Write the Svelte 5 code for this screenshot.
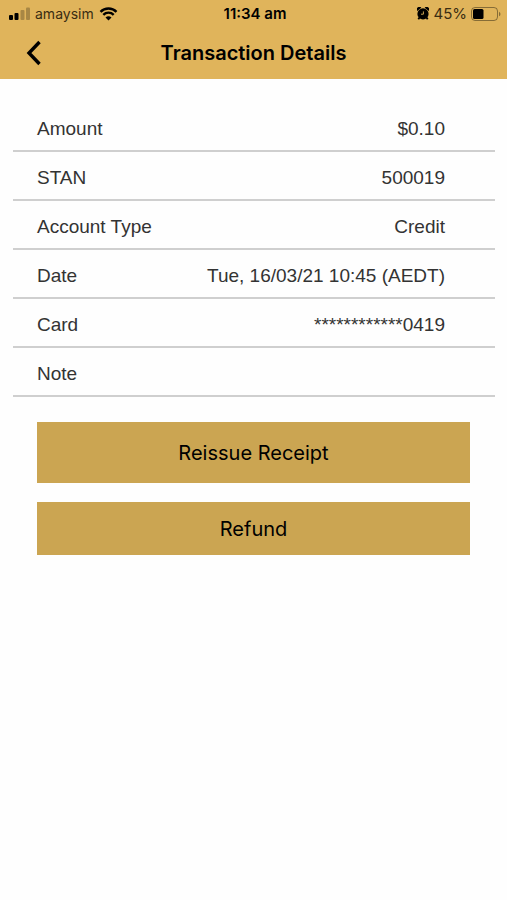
<script lang="ts">
    type Row = { label: string; value: string };

    const carrier = 'amaysim';
    const time = '11:34 am';
    const battery = 45;

    let rows = $state<Row[]>([
        { label: 'Amount', value: '$0.10' },
        { label: 'STAN', value: '500019' },
        { label: 'Account Type', value: 'Credit' },
        { label: 'Date', value: 'Tue, 16/03/21 10:45 (AEDT)' },
        { label: 'Card', value: '************0419' },
        { label: 'Note', value: '' },
    ]);
</script>

<svelte:head>
    <title>Transaction Details</title>
</svelte:head>

<header>
    <div class="status">
        <div class="side">
            <svg width="21" height="14" viewBox="0 0 21 14" aria-hidden="true">
                <rect x="0" y="8" width="4" height="5" rx="1" />
                <rect x="5.5" y="6" width="4" height="7" rx="1" />
                <rect x="11.5" y="3" width="4" height="10" rx="1" opacity="0.25" />
                <rect x="17" y="0.5" width="4" height="12.5" rx="1" opacity="0.25" />
            </svg>
            <span class="carrier">{carrier}</span>
            <svg class="wifi" width="19" height="14" viewBox="0 0 18 14" aria-hidden="true">
                <path d="M1 4.8a11.4 11.4 0 0 1 16 0" />
                <path d="M3.8 7.8a7.4 7.4 0 0 1 10.4 0" />
                <path class="dot" d="M9 13.6 6 10.6a4.3 4.3 0 0 1 6 0z" />
            </svg>
        </div>
        <span class="time">{time}</span>
        <div class="side right">
            <svg width="12" height="13" viewBox="0 0 12 13" aria-hidden="true">
                <path d="M0.3 4a2.3 2.3 0 0 1 4-3.2zM11.7 4a2.3 2.3 0 0 0-4-3.2z" />
                <circle cx="6" cy="6.9" r="5.6" />
                <path d="m2.5 10.4-1.2 1.9M9.5 10.4l1.2 1.9" stroke="#000" stroke-width="1.8" />
                <path d="M6.4 4.4v2.8H4" fill="none" stroke="#e0b45b" stroke-width="0.9" />
            </svg>
            <span class="percent">{battery}%</span>
            <svg width="30" height="14" viewBox="0 0 30 14" aria-hidden="true">
                <rect x="0.5" y="0.5" width="26" height="13" rx="3.5" fill="none" stroke="#000" stroke-opacity="0.4" />
                <rect x="2" y="2" width="10.5" height="10" rx="1.5" />
                <path d="M28 4.7a2.5 2.5 0 0 1 0 4.6z" opacity="0.4" />
            </svg>
        </div>
    </div>
    <nav>
        <button class="back" aria-label="Back">
            <svg width="18" height="26" viewBox="0 0 18 26" aria-hidden="true">
                <path d="M15.5 2 5 13l10.5 11" fill="none" stroke="#000" stroke-width="3.4" />
            </svg>
        </button>
        <h1>Transaction Details</h1>
    </nav>
</header>

<main>
    <table>
        <tbody>
            {#each rows as row}
                <tr>
                    <th scope="row">{row.label}</th>
                    <td>{row.value}</td>
                </tr>
            {/each}
        </tbody>
    </table>

    <div class="actions">
        <button class="reissue">Reissue Receipt</button>
        <button class="refund">Refund</button>
    </div>
</main>

<style>
    :global(body) {
        background-color: #fefefe;
    }

    header {
        background-color: #e0b45b;
        color: #000;
        font-family: Inter, sans-serif;
    }

    .status {
        display: grid;
        grid-template-columns: 1fr auto 1fr;
        align-items: center;
        height: 27px;
        padding: 0 6px 0 9px;
        font-size: 14px;
    }

    .side {
        display: flex;
        align-items: center;
        gap: 5px;
    }

    .right {
        justify-content: flex-end;
        gap: 4px;
    }

    .time {
        font-size: 15px;
        font-weight: 600;
    }

    .percent {
        font-size: 15px;
    }

    .carrier,
    .percent {
        color: #3a2d12;
    }

    .wifi {
        fill: none;
        stroke: #000;
        stroke-width: 2.4;
    }

    .wifi .dot {
        fill: #000;
        stroke: none;
    }

    nav {
        display: grid;
        grid-template-columns: 66px 1fr 66px;
        align-items: center;
        height: 52px;
    }

    button {
        border: 0;
        padding: 0;
        color: #000;
        font-family: Inter, sans-serif;
        font-size: 20px;
        cursor: pointer;
    }

    .back {
        display: flex;
        justify-content: center;
        background: none;
    }

    h1 {
        margin: 0;
        font-size: 20px;
        font-weight: 600;
        text-align: center;
    }

    main {
        padding: 24px 12px 0 13px;
    }

    table {
        width: 100%;
        border-collapse: separate;
        border-spacing: 0;
        color: #333;
        font-family: 'Liberation Sans', sans-serif;
        font-size: 19px;
    }

    th,
    td {
        box-sizing: border-box;
        height: 49px;
        padding: 4px 0 0 24px;
        border-bottom: 2px solid #cfcfcf;
        font-weight: normal;
        text-align: left;
    }

    td {
        padding: 4px 50px 0 0;
        text-align: right;
    }

    .actions {
        display: flex;
        flex-direction: column;
        gap: 19px;
        padding: 25px 25px 25px 24px;
    }

    .actions button {
        background-color: #cba552;
    }

    .reissue {
        height: 61px;
    }

    .refund {
        height: 53px;
    }
</style>
